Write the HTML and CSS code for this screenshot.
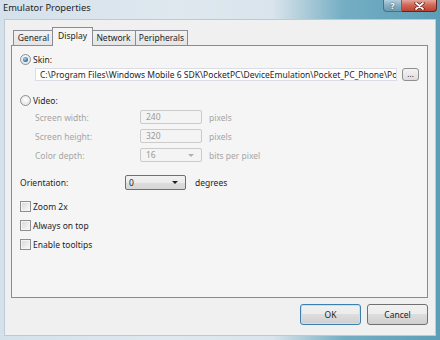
FILE: index.html
```html
<!doctype html>
<html>
  <head>
    <title>Emulator Properties</title>
    <meta http-equiv="Content-Type" content="text/html; charset=utf-8" />
    <link rel="stylesheet" href="styles.css">
  </head>
  <body>
    <div class="window">
      <div class="titlebar">
        <span class="title">Emulator Properties</span>
        <div class="caption">
          <span class="cap-help">?</span>
          <span class="cap-close">
            <svg width="11" height="8" viewBox="0 0 11 8">
              <path d="M2 1 L9 7 M9 1 L2 7" stroke="#4a1f1a" stroke-width="3.2" stroke-linecap="round" />
              <path d="M2 1 L9 7 M9 1 L2 7" stroke="#ffffff" stroke-width="1.8" stroke-linecap="round" />
            </svg>
          </span>
        </div>
      </div>
      <div class="client">
        <div class="tabs">
          <span class="tab general">General</span>
          <span class="tab active">Display</span>
          <span class="tab network">Network</span>
          <span class="tab peripherals">Peripherals</span>
        </div>
        <div class="panel">
          <div class="option"><span class="radio checked"></span>Skin:</div>
          <div class="skin-row">
            <div class="field">C:\Program Files\Windows Mobile 6 SDK\PocketPC\DeviceEmulation\Pocket_PC_Phone\Pocket_PC_Phone.xml</div>
            <span class="browse">...</span>
          </div>
          <div class="option video"><span class="radio"></span>Video:</div>
          <div class="video-grid">
            <span class="label">Screen width:</span>
            <span class="box">240</span>
            <span class="label">pixels</span>
            <span class="label">Screen height:</span>
            <span class="box">320</span>
            <span class="label">pixels</span>
            <span class="label">Color depth:</span>
            <span class="box combo">16<i class="arrow grey"></i></span>
            <span class="label">bits per pixel</span>
          </div>
          <div class="orient">
            <span>Orientation:</span>
            <span class="dropdown">0<i class="arrow"></i></span>
            <span>degrees</span>
          </div>
          <div class="checks">
            <div class="option"><span class="check"></span>Zoom 2x</div>
            <div class="option"><span class="check"></span>Always on top</div>
            <div class="option"><span class="check"></span>Enable tooltips</div>
          </div>
        </div>
        <div class="buttons">
          <button class="btn default">OK</button>
          <button class="btn">Cancel</button>
        </div>
      </div>
    </div>
  </body>
</html>
```

FILE: styles.css
```css
* {
  margin: 0px;
  padding: 0px;
  box-sizing: border-box;
}
body {
  width: 440px;
  height: 340px;
  overflow: hidden;
  font-family: "Noto Sans", "Open Sans", sans-serif;
  font-size: 8.5px;
  color: #1e1e1e;
  background: linear-gradient(
    90deg,
    #d4e1eb 0%,
    #dfe8ef 40%,
    #d9e4ec 62%,
    #a9c9d7 70%,
    #74aec4 78%,
    #5c9eb7 100%
  );
}
.window {
  display: flex;
  flex-direction: column;
  height: 340px;
}
.titlebar {
  height: 19px;
  display: flex;
  align-items: flex-start;
}
.title {
  padding: 2px 0 0 3px;
  font-size: 9.3px;
  line-height: 12px;
}
.caption {
  display: flex;
  margin-left: auto;
  margin-right: 3px;
}
.cap-help {
  width: 19px;
  height: 12px;
  border: 1px solid #4f6f86;
  border-top: none;
  border-radius: 0 0 0 4px;
  background: linear-gradient(#b4d0de, #86afc5 50%, #6d99b2);
  color: #fff;
  text-align: center;
  font-weight: bold;
  line-height: 11px;
  text-shadow: 0 0 2px #2c4455;
}
.cap-close {
  width: 35px;
  height: 12px;
  border: 1px solid #5e2720;
  border-top: none;
  border-left: none;
  border-radius: 0 0 4px 0;
  background: linear-gradient(#e6a69b, #d06a5a 45%, #c0402f);
  display: flex;
  align-items: center;
  justify-content: center;
}
.client {
  flex: 1;
  margin: 0 4px 4px;
  background: #f0f0f0;
  border: 1px solid #bccad6;
  padding: 7px 7px 0 6px;
}
.tabs {
  display: flex;
  align-items: flex-end;
  height: 18px;
  margin-left: 2px;
}
.tab {
  height: 15px;
  border: 1px solid #898c95;
  border-bottom: none;
  border-right: none;
  background: linear-gradient(#f2f2f2, #e4e4e4);
  text-align: center;
  line-height: 13px;
}
.tab.general {
  width: 40px;
}
.tab.network {
  width: 43px;
  margin-left: -1px;
  border-left: none;
}
.tab.peripherals {
  width: 53px;
  border-right: 1px solid #898c95;
}
.tab.active {
  position: relative;
  z-index: 1;
  width: 41px;
  height: 19px;
  margin: 0 0 -1px -1px;
  border-right: 1px solid #898c95;
  background: #f5f5f5;
  line-height: 15px;
}
.panel {
  height: 253px;
  border: 1px solid #898c95;
  background: #f5f5f5;
  padding: 7px 8px 0 8px;
}
.option {
  display: flex;
  align-items: center;
  gap: 2px;
  height: 13px;
}
.radio {
  width: 11px;
  height: 11px;
  border-radius: 50%;
  border: 1px solid #8e8f8f;
  background: radial-gradient(circle at 50% 40%, #ffffff, #dcdcdc);
  display: flex;
  align-items: center;
  justify-content: center;
}
.radio.checked::after {
  content: "";
  width: 5px;
  height: 5px;
  border-radius: 50%;
  background: radial-gradient(circle at 40% 35%, #9fd4f4, #2a6aa6 70%);
}
.check {
  width: 11px;
  height: 11px;
  border: 1px solid #8e8f8f;
  background: linear-gradient(135deg, #d6d6d6, #fbfbfb);
  box-shadow: inset 0 0 0 1px #f4f4f4;
}
.skin-row {
  display: flex;
  align-items: center;
  height: 14px;
  margin: 1px 0 0 15px;
}
.field {
  width: 365px;
  height: 13px;
  border: 1px solid #dadde3;
  background: #ffffff;
  padding-left: 4px;
  line-height: 11px;
  white-space: nowrap;
  overflow: hidden;
}
.browse {
  width: 17px;
  height: 13px;
  margin-left: 5px;
  border: 1px solid #8e8f8f;
  border-radius: 3px;
  background: linear-gradient(#f4f4f4, #dedede);
  text-align: center;
  line-height: 10px;
  font-size: 8px;
}
.option.video {
  margin-top: 13px;
}
.video-grid {
  display: grid;
  grid-template-columns: 98px 62px auto;
  grid-auto-rows: 14px;
  column-gap: 7px;
  row-gap: 5px;
  align-items: center;
  margin: 3px 0 0 15px;
  color: #a5a5a5;
}
.box {
  position: relative;
  height: 14px;
  border: 1px solid #cbcbcb;
  border-radius: 2px;
  background: #f4f4f4;
  color: #9a9a9a;
  padding-left: 5px;
  line-height: 12px;
}
.arrow {
  position: absolute;
  right: 7px;
  top: 5px;
  border-left: 3px solid transparent;
  border-right: 3px solid transparent;
  border-top: 3px solid #1e1e1e;
}
.arrow.grey {
  border-top-color: #b0b0b0;
}
.orient {
  display: grid;
  grid-template-columns: 96px 61px auto;
  column-gap: 9px;
  align-items: center;
  margin-top: 13px;
}
.dropdown {
  position: relative;
  height: 15px;
  border: 1px solid #707070;
  border-radius: 2px;
  background: linear-gradient(#f2f2f2, #ebebeb 50%, #dddddd 51%, #d6d6d6);
  padding-left: 3px;
  line-height: 13px;
}
.checks {
  display: flex;
  flex-direction: column;
  gap: 6px;
  margin-top: 10px;
}
.buttons {
  display: flex;
  justify-content: flex-end;
  gap: 6px;
  margin-top: 6px;
}
.btn {
  width: 61px;
  height: 21px;
  border: 1px solid #707070;
  border-radius: 3px;
  background: linear-gradient(#f2f2f2, #ebebeb 49%, #dddddd 50%, #cfcfcf);
  font: inherit;
  color: #1e1e1e;
}
.btn.default {
  border-color: #3c7fb1;
  box-shadow: inset 0 0 0 1px #bfe3f7;
}
```
